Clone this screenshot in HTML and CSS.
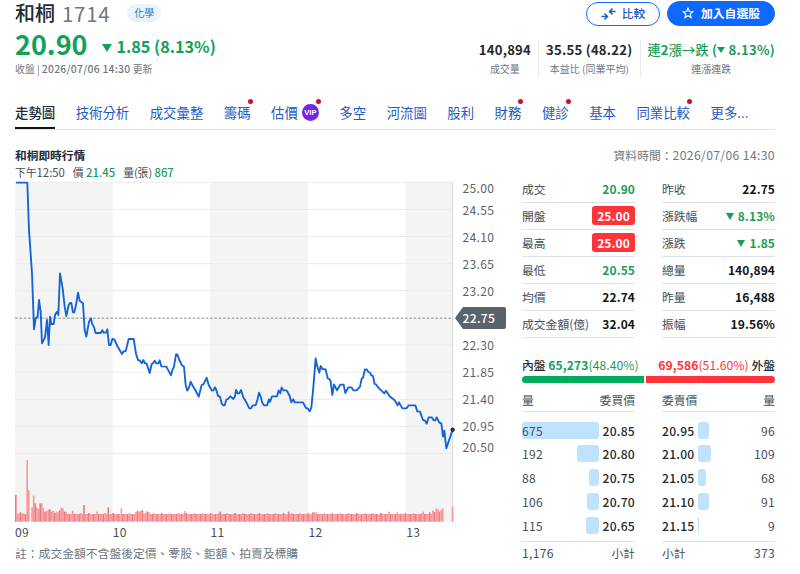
FILE: index.html
```html
<!DOCTYPE html>
<html lang="zh-Hant">
<head>
    <meta charset="UTF-8">
    <meta name="viewport" content="width=device-width, initial-scale=1.0">
    <title>和桐 1714</title>
    <link rel="stylesheet" href="styles.css">
</head>
<body>
    <header>
        <div class="quote">
            <div class="name-row">
                <h1>和桐</h1>
                <span class="code">1714</span>
                <span class="tag">化學</span>
            </div>
            <div class="price-row">
                <span class="price">20.90</span>
                <span class="change"><i class="down"></i>1.85 (8.13%)</span>
            </div>
            <div class="time">收盤 | <b>2026/07/06 14:30</b> 更新</div>
        </div>
        <div class="side">
            <div class="buttons">
                <button class="compare">
                    <svg width="15" height="12" viewBox="0 0 15 12" fill="none" stroke="currentColor" stroke-width="1.5">
                        <path d="M.5 8.5h5.5M3.500 5.500l3 3-3 3M14.500 3.500H9M11.500.5l-3 3 3 3"/>
                    </svg>
                    <span>比較</span>
                </button>
                <button class="add">
                    <svg width="12" height="12" viewBox="0 0 24 24" fill="none" stroke="currentColor" stroke-width="2.4">
                        <path d="M12 2.500l2.700 6.500 7 .6-5.300 4.600 1.600 6.900-6-3.700-6 3.700 1.600-6.900L2.300 9.600l7-.6z"/>
                    </svg>
                    <span>加入自選股</span>
                </button>
            </div>
            <div class="stats">
                <div class="stat"><b>140,894</b><span>成交量</span></div>
                <div class="stat"><b>35.55 (48.22)</b><span>本益比 (同業平均)</span></div>
                <div class="stat green"><b><em>連</em>2<em>漲→跌</em> (<i class="down"></i> 8.13%)</b><span>連漲連跌</span></div>
            </div>
        </div>
    </header>

    <nav>
        <a class="active">走勢圖</a>
        <a>技術分析</a>
        <a>成交彙整</a>
        <a class="dot">籌碼</a>
        <a class="dot vip-tab">估價<span class="vip">VIP</span></a>
        <a>多空</a>
        <a>河流圖</a>
        <a>股利</a>
        <a class="dot">財務</a>
        <a class="dot">健診</a>
        <a>基本</a>
        <a class="dot">同業比較</a>
        <a>更多...</a>
    </nav>

    <div class="section-head">
        <h2>和桐即時行情</h2>
        <div class="updated">資料時間：<span>2026/07/06 14:30</span></div>
    </div>

    <main>
        <section class="chart">
            <div class="legend">
                <span>下午<small>12:50</small></span>
                <span>價 <b>21.45</b></span>
                <span>量(張) <b>867</b></span>
            </div>
            <div class="plot-row">
                <svg class="plot" width="438" height="340" viewBox="0 0 1314 1020">
                    <g fill="#f4f4f4">
                        <rect x="0" y="0" width="293" height="1020"/>
                        <rect x="586" y="0" width="293" height="1020"/>
                        <rect x="1172" y="0" width="142" height="1020"/>
                    </g>
                    <path class="grid" d="M0 1H1314M0 82H1314M0 163.5H1314M0 245H1314M0 326H1314M0 489H1314M0 570.5H1314M0 652H1314M0 733H1314M0 814H1314"/>
                    <path class="border" d="M1313 0V1020"/>
                    <path class="prev" d="M0 408.5H1314"/>
                    <g id="volume"></g>
                    <polyline class="line" points="3,2 37,2 42,144 51,274 57,442 62,409 68,404 72,354 77,389 81,484 90,466 96,414 101,489 105,404 109,426 116,426 120,399 126,389 130,399 135,274 143,319 149,374 154,402 161,369 165,363 169,363 174,391 178,391 184,364 189,332 194,356 204,364 209,444 214,464 222,419 228,409 231,424 237,436 242,453 257,453 262,445 266,452 273,452 277,442 282,489 287,489 292,471 298,472 307,492 321,516 326,508 332,507 336,492 341,471 356,471 363,515
                    369,534 375,536 380,544 385,534 389,543 395,545 404,573 410,546 414,544 419,536 424,544 430,544 434,535 439,553 454,554 468,580 473,562 477,554 483,517 487,517 493,534 501,550 507,554 512,609 517,626 523,614 527,599 533,611 541,624 551,644 560,609 566,606 575,587 581,609 591,626 595,625 600,616 605,627 609,642 615,644 620,664 624,670 629,670 634,653 639,651 646,643 655,651 660,643 663,624 668,634 673,634 678,624
                    685,646 694,661 703,679 708,679 713,670 722,670 727,654 732,632 737,644 742,662 747,670 756,670 762,652 765,660 771,643 786,643 791,625 796,634 800,616 805,625 815,625 824,642 829,661 835,652 839,661 864,661 873,678 879,680 884,688 889,677 895,616 902,529 907,554 913,572 917,552 922,561 932,562 938,589 943,591 947,598 952,639 957,607 966,625 976,608 986,608 991,633 1000,616 1010,616 1015,625 1025,625 1035,614 1040,590 1044,587 1050,562 1055,562 1060,570 1065,572 1069,580 1074,582 1079,606 1084,608 1089,616 1108,634 1113,626 1124,643 1139,655 1148,670 1152,661 1162,679 1175,679 1181,670 1201,670 1207,688 1215,689 1224,714 1230,716 1235,725 1241,706 1250,706 1256,715 1261,715 1265,706 1273,722 1279,724 1284,764 1288,746 1294,799 1313,743"/>
                    <circle cx="1313" cy="743" r="6.5" fill="#232a31"/>
                </svg>
                <div class="y-axis">
                    <span>25.00</span>
                    <span>24.55</span>
                    <span>24.10</span>
                    <span>23.65</span>
                    <span>23.20</span>
                    <span class="current">22.75</span>
                    <span>22.30</span>
                    <span>21.85</span>
                    <span>21.40</span>
                    <span>20.95</span>
                    <span>20.50</span>
                </div>
            </div>
            <div class="x-axis"><span>09</span><span>10</span><span>11</span><span>12</span><span>13</span></div>
            <p class="note">註：成交金額不含盤後定價、零股、鉅額、拍賣及標購</p>
        </section>

        <section class="detail">
            <div class="columns">
                <ul class="list">
                    <li><span>成交</span><b class="green">20.90</b></li>
                    <li><span>開盤</span><b class="limit">25.00</b></li>
                    <li><span>最高</span><b class="limit">25.00</b></li>
                    <li><span>最低</span><b class="green">20.55</b></li>
                    <li><span>均價</span><b>22.74</b></li>
                    <li><span>成交金額(億)</span><b>32.04</b></li>
                </ul>
                <ul class="list">
                    <li><span>昨收</span><b>22.75</b></li>
                    <li><span>漲跌幅</span><b class="green"><i class="down"></i>8.13%</b></li>
                    <li><span>漲跌</span><b class="green"><i class="down"></i>1.85</b></li>
                    <li><span>總量</span><b>140,894</b></li>
                    <li><span>昨量</span><b>16,488</b></li>
                    <li><span>振幅</span><b>19.56%</b></li>
                </ul>
            </div>

            <div class="ratio">
                <div>內盤 <span class="green"><b>65,273</b>(48.40%)</span></div>
                <div><span class="red"><b>69,586</b>(51.60%)</span> 外盤</div>
            </div>
            <div class="ratio-bar">
                <div class="in" style="width: 48.4%"></div>
                <div class="out"></div>
            </div>

            <div class="columns">
                <div class="book buy">
                    <div class="book-head"><span>量</span><span>委買價</span></div>
                    <div class="book-body">
                        <div class="order"><div class="track"><i style="width: 100%"></i><span>675</span></div><b>20.85</b></div>
                        <div class="order"><div class="track"><i style="width: 28.4%"></i><span>192</span></div><b>20.80</b></div>
                        <div class="order"><div class="track"><i style="width: 13%"></i><span>88</span></div><b>20.75</b></div>
                        <div class="order"><div class="track"><i style="width: 15.7%"></i><span>106</span></div><b>20.70</b></div>
                        <div class="order"><div class="track"><i style="width: 17%"></i><span>115</span></div><b>20.65</b></div>
                    </div>
                    <div class="book-foot"><span class="num">1,176</span><span>小計</span></div>
                </div>
                <div class="book sell">
                    <div class="book-head"><span>委賣價</span><span>量</span></div>
                    <div class="book-body">
                        <div class="order"><b>20.95</b><div class="track"><i style="width: 14.2%"></i><span>96</span></div></div>
                        <div class="order"><b>21.00</b><div class="track"><i style="width: 16.1%"></i><span>109</span></div></div>
                        <div class="order"><b>21.05</b><div class="track"><i style="width: 10.1%"></i><span>68</span></div></div>
                        <div class="order"><b>21.10</b><div class="track"><i style="width: 13.5%"></i><span>91</span></div></div>
                        <div class="order"><b>21.15</b><div class="track"><i style="width: 1.3%"></i><span>9</span></div></div>
                    </div>
                    <div class="book-foot"><span>小計</span><span class="num">373</span></div>
                </div>
            </div>
        </section>
    </main>
    <script src="script.js"></script>
</body>
</html>
```
FILE: styles.css
```css
* {
    box-sizing: border-box;
}

body {
    font-family: "Noto Sans CJK TC", sans-serif;
    font-size: 11.8px;
    margin: 0;
    padding: 0 25px 0 15px;
    height: 574px;
    overflow: hidden;
    color: #232a31;
    background-color: #fff;
}

h1, h2, ul, p {
    margin: 0;
    padding: 0;
}

i, em {
    font-style: normal;
}

.green {
    color: #1a9d59;
}

.red {
    color: #ff333a;
}

.down {
    display: inline-block;
    border: 4px solid transparent;
    border-top: 7px solid currentColor;
    border-bottom: 0;
}

/* Header */
header {
    display: flex;
    justify-content: space-between;
    height: 92px;
}

.name-row {
    display: flex;
    align-items: center;
    height: 26px;
}

h1 {
    font-size: 20px;
    font-weight: 500;
    line-height: 24px;
}

.code {
    margin: -1px 0 0 7px;
    font-size: 20.5px;
    line-height: 24px;
    letter-spacing: 0.7px;
    color: #6e7780;
}

.tag {
    margin-left: 17px;
    padding: 0 7px;
    border-radius: 9px;
    font-size: 10px;
    line-height: 18px;
    color: #0f7fc9;
    background-color: #e8f4fd;
}

.price-row {
    display: flex;
    align-items: center;
    height: 36px;
    font-weight: 700;
    color: #12a05a;
}

.price {
    font-size: 27px;
    line-height: 32px;
}

.change {
    margin: 4px 0 0 14px;
    font-size: 16.2px;
    line-height: 24px;
}

.change .down {
    margin-right: 5px;
    vertical-align: 1px;
    border-width: 8px 5px 0;
}

.time {
    font-size: 9.9px;
    line-height: 14px;
    color: #6e7780;
}

.time b {
    font-size: 10.4px;
    font-weight: 500;
    letter-spacing: 0.25px;
}

.buttons {
    display: flex;
    justify-content: flex-end;
    gap: 7px;
    padding-top: 1px;
}

button {
    display: flex;
    align-items: center;
    justify-content: center;
    height: 25px;
    padding: 0 0 1px;
    border: 1.5px solid #0f69ff;
    border-radius: 13px;
    font-family: inherit;
    font-size: 11.8px;
    line-height: 18px;
}

button span {
    margin-top: -1px;
}

.compare {
    width: 74px;
    gap: 6px;
    height: 24px;
    margin-top: 1px;
    color: #1f5bc4;
    background-color: #fff;
    font-weight: 500;
}

.add {
    width: 108px;
    gap: 7px;
    color: #fff;
    background-color: #0f69ff;
    font-weight: 700;
}

.stats {
    display: flex;
    justify-content: flex-end;
    margin-top: 14px;
}

.stat {
    display: flex;
    flex-direction: column;
    align-items: center;
    height: 37px;
    padding: 0 7px;
    border-right: 1px solid #e8ebee;
    white-space: nowrap;
}

.stat:last-child {
    padding-right: 0;
    border: 0;
}

.stat b {
    font-size: 13.1px;
    line-height: 19px;
    letter-spacing: 0.25px;
}

.stat em {
    font-weight: 500;
}

.stat .down {
    border-width: 6px 4px 0;
    vertical-align: 2px;
}

.stat span {
    font-size: 10px;
    line-height: 19px;
    color: #6e7780;
}

/* Tabs */
nav {
    display: flex;
    justify-content: flex-start;
    gap: 20.5px;
    height: 38px;
    border-bottom: 1px solid #e0e4e9;
}

nav a {
    position: relative;
    height: 37px;
    padding-top: 10px;
    font-size: 13.4px;
    line-height: 20px;
    white-space: nowrap;
    color: #1f5bc4;
}

nav .active {
    color: #232a31;
    font-weight: 500;
    border-bottom: 2px solid #101518;
}

nav .dot::after {
    content: "";
    position: absolute;
    top: 7px;
    right: -2px;
    width: 5px;
    height: 5px;
    border-radius: 50%;
    background-color: #c8102e;
}

.vip-tab {
    display: flex;
    gap: 4px;
}

.vip {
    width: 17px;
    height: 17px;
    margin-top: 2px;
    border-radius: 50%;
    text-align: center;
    font: bold 7.5px/17px "Liberation Sans", sans-serif;
    color: #fff;
    background-color: #7524ea;
}

.section-head {
    display: flex;
    justify-content: space-between;
    margin-top: 15px;
    height: 20px;
    line-height: 20px;
}

h2 {
    font-size: 11.7px;
}

.updated {
    color: #6e7780;
}

.updated span {
    font-size: 12.2px;
    letter-spacing: 0.35px;
}

main {
    display: flex;
    justify-content: space-between;
}

/* Chart */
.chart {
    width: 492px;
}

.legend {
    display: flex;
    gap: 8px;
    height: 17px;
    font-size: 10.8px;
    line-height: 15px;
    color: #464e56;
}

.legend small {
    font-size: 11.3px;
}

.legend b {
    font-size: 11.3px;
    font-weight: 500;
    color: #1a9d59;
}

.plot-row {
    display: flex;
}

.plot {
    flex: none;
    overflow: visible;
}

.grid, .border, .prev, .line {
    fill: none;
    stroke: #ebebeb;
    stroke-width: 3;
}

.border {
    stroke: #d8dadd;
}

.prev {
    stroke: #8c9196;
    stroke-dasharray: 8 5;
}

.line {
    stroke: #1464d8;
    stroke-width: 5.6;
    stroke-linejoin: round;
}

.y-axis {
    display: flex;
    flex-direction: column;
    height: 288px;
    margin: -8px 0 0 2px;
    font-size: 12.1px;
    letter-spacing: 0.3px;
    color: #5b636a;
}

.y-axis span {
    height: 27.1px;
    padding-left: 7.5px;
    line-height: 27px;
}

.y-axis span:first-child {
    height: 21.5px;
}

.y-axis span:last-child {
    height: 21px;
    line-height: 15px;
}

.y-axis .current {
    width: 51px;
    height: 22px;
    margin: 3px 0 2px;
    line-height: 21px;
    font-weight: 500;
    color: #fff;
    background-color: #5b636a;
    border-radius: 2px;
    clip-path: polygon(0 50%, 8px 0, 100% 0, 100% 100%, 8px 100%);
}

.x-axis {
    display: flex;
    font-size: 12.1px;
    line-height: 20px;
    color: #464e56;
}

.x-axis span {
    width: 97.8px;
    letter-spacing: 0.3px;
}

.note {
    line-height: 22px;
    color: #6e7780;
}

/* Detail */
.detail {
    width: 253px;
}

.columns {
    display: flex;
    justify-content: space-between;
}

.list {
    width: 113px;
    padding-top: 10.5px;
    list-style: none;
}

.list li {
    display: flex;
    align-items: center;
    justify-content: space-between;
    height: 27.1px;
    padding-bottom: 1px;
    border-bottom: 1px solid #e0e4e9;
    color: #464e56;
    white-space: nowrap;
}

.list b {
    font-size: 12px;
    letter-spacing: 0.1px;
    color: #101518;
}

.list .green {
    color: #1a9d59;
}

.list .down {
    margin-right: 4px;
    vertical-align: 1px;
}

.list .limit {
    width: 43px;
    border-radius: 3px;
    line-height: 19px;
    text-align: center;
    color: #fff;
    background-color: #ff333a;
}

.ratio {
    display: flex;
    justify-content: space-between;
    margin-top: 16.4px;
    line-height: 22px;
    white-space: nowrap;
    font-weight: 500;
}

.ratio span {
    font-weight: 400;
    font-size: 12.1px;
    letter-spacing: 0.1px;
}

.ratio-bar {
    display: flex;
    gap: 2px;
    height: 7px;
    border-radius: 4px;
    overflow: hidden;
}

.in {
    flex: none;
    background-color: #00ab5e;
}

.out {
    flex: 1;
    background-color: #ff333a;
}

.book {
    width: 113px;
    color: #464e56;
}

.book-head, .book-foot {
    display: flex;
    justify-content: space-between;
}

.book-head {
    height: 29px;
    line-height: 34px;
    border-bottom: 1px solid #e0e4e9;
}

.book-body {
    padding-top: 6px;
    height: 130px;
    border-bottom: 1px solid #e0e4e9;
    font-size: 12.1px;
    letter-spacing: 0.25px;
}

.order {
    display: flex;
    align-items: center;
    gap: 4px;
    height: 23.7px;
}

.order b {
    font-weight: 500;
    color: #232a31;
}

.track {
    display: flex;
    position: relative;
    flex: 1;
    height: 17px;
    line-height: 17px;
}

.track i {
    border-radius: 3px;
    background-color: #bfe3ff;
}

.buy .track i {
    margin-left: auto;
}

/* quantities are written over the bars */
.track span {
    position: absolute;
    left: 0;
    top: 0;
}

.sell .track span {
    left: auto;
    right: 0;
}

.book-foot {
    line-height: 22px;
}

.num {
    font-size: 12.2px;
    letter-spacing: 0.25px;
}
```
FILE: script.js
```js
// Volume per minute, 09:00 to 13:30
const opening = [80, 24, 26, 28, 25, 24, 23, 185, 95, 0, 43, 78, 55, 42, 38, 55, 55, 40, 30, 32, 36, 37, 30, 32, 26, 30, 28, 34, 42, 40, 30, 29];
const spikes = {35: 33, 42: 50, 50: 30, 57: 43, 65: 40, 74: 29, 75: 33, 76: 30, 77: 32, 78: 35, 81: 31, 82: 29, 104: 32, 126: 30, 168: 30, 183: 28, 184: 28, 185: 28, 230: 30, 235: 28, 251: 30, 255: 28, 257: 34, 258: 29, 259: 40, 260: 37, 261: 30, 262: 35, 263: 40};
const volume = document.getElementById('volume');

for (let i = 0; i < 270; i++) {
    let height = opening[i];
    if (height === undefined) {
        height = spikes[i] || 23 + (i * 7 % 5 === 0 ? 3 : 0);
    }
    if (i > 263) {
        height = i === 269 ? 46 : 0;
    }
    const bar = document.createElementNS('http://www.w3.org/2000/svg', 'rect');
    bar.setAttribute('x', i * 4.87);
    bar.setAttribute('y', 1019 - height);
    bar.setAttribute('width', 4.87);
    bar.setAttribute('height', height);
    bar.setAttribute('fill', i % 3 === 0 ? '#e8797d' : '#fc9699');
    volume.appendChild(bar);
}
```
